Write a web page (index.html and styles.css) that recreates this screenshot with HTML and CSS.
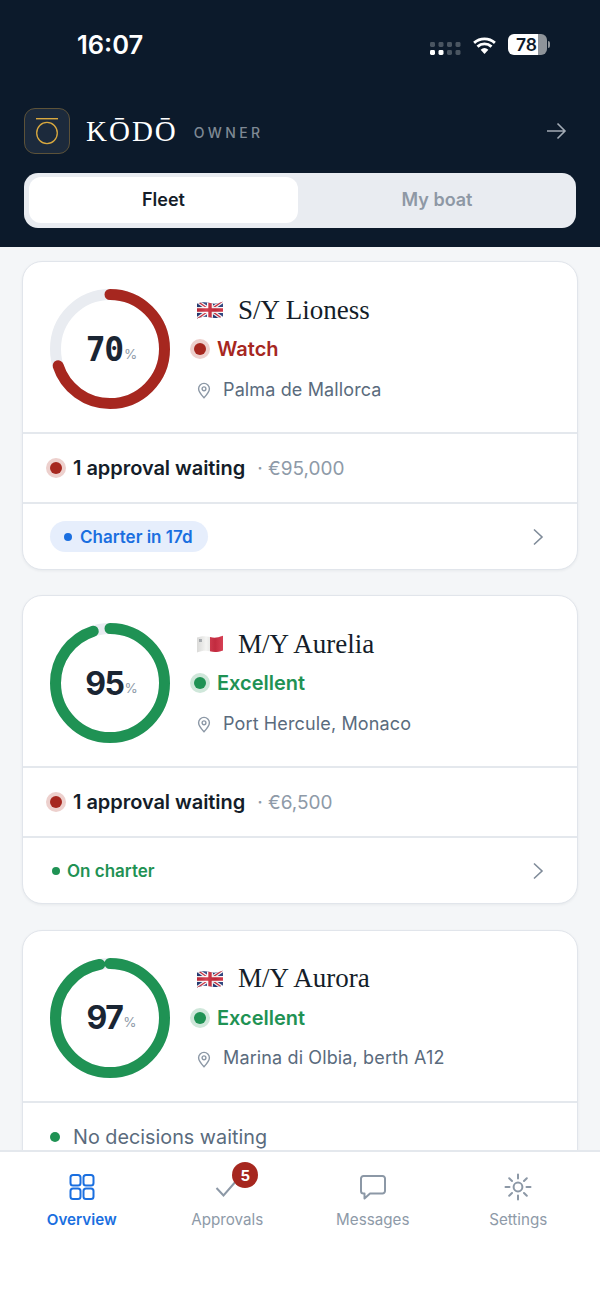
FILE: index.html
```html
<!DOCTYPE html>
<html lang="en">
<head>
    <meta charset="UTF-8">
    <meta name="viewport" content="width=device-width, initial-scale=1.0">
    <title>Kodo Owner</title>
    <link rel="stylesheet" href="styles.css">
</head>
<body>
    <svg class="svg-defs" width="0" height="0">
        <defs>
            <clipPath id="flagWave">
                <path d="M0 2.5 C6 0.5 9 1 13 2 S20 3 26 0.8 V15.5 C20 17.5 17 17.3 13 16.3 S5 15.3 0 17.5 Z"/>
            </clipPath>
            <linearGradient id="flagShade" x1="0" x2="1" y1="0" y2="0">
                <stop offset="0" stop-color="#000" stop-opacity="0.1"/>
                <stop offset="0.35" stop-color="#fff" stop-opacity="0.12"/>
                <stop offset="0.7" stop-color="#000" stop-opacity="0.08"/>
                <stop offset="1" stop-color="#fff" stop-opacity="0.08"/>
            </linearGradient>
        </defs>
    </svg>
    <div class="app">
        <div class="header">
            <div class="status-bar">
                <span class="clock">16:07</span>
                <div class="status-icons">
                    <svg class="signal" width="31" height="13" viewBox="0 0 31 13">
                        <g fill="#4a5561">
                            <rect x="0" y="0" width="5" height="5" rx="1.4"/><rect x="8.5" y="0" width="5" height="5" rx="1.4"/><rect x="17" y="0" width="5" height="5" rx="1.4"/><rect x="25.5" y="0" width="5" height="5" rx="1.4"/>
                            <rect x="17" y="8" width="5" height="5" rx="1.4"/><rect x="25.5" y="8" width="5" height="5" rx="1.4"/>
                        </g>
                        <rect x="0" y="8" width="5" height="5" rx="1.4" fill="#fff"/><rect x="8.5" y="8" width="5" height="5" rx="1.4" fill="#fff"/>
                    </svg>
                    <svg class="wifi" width="25" height="17" viewBox="0 0 26 18">
                        <path d="M13 18 L8.9 13.4 A6.2 6.2 0 0 1 17.1 13.4 Z" fill="#fff"/>
                        <path d="M5.6 10.2 A11 11 0 0 1 20.4 10.2" fill="none" stroke="#fff" stroke-width="3"/>
                        <path d="M2 6.2 A16.4 16.4 0 0 1 24 6.2" fill="none" stroke="#fff" stroke-width="3"/>
                    </svg>
                    <div class="battery">
                        <div class="battery-body"><span class="battery-level">78</span></div>
                        <span class="battery-tip"></span>
                    </div>
                </div>
            </div>
            <div class="brand-row">
                <div class="logo">
                    <svg width="28" height="32" viewBox="0 0 28 32">
                        <rect x="3" y="3" width="22" height="1.4" fill="#d9a93f"/>
                        <ellipse cx="14" cy="18" rx="10.3" ry="10.6" fill="none" stroke="#d9a93f" stroke-width="1.3"/>
                    </svg>
                </div>
                <span class="brand-name">KŌDŌ</span>
                <span class="brand-role">OWNER</span>
                <svg class="brand-arrow" width="22" height="20" viewBox="0 0 22 20">
                    <path d="M2 10 H20 M12.5 2.5 L20 10 L12.5 17.5" fill="none" stroke="#a3abb5" stroke-width="1.6"/>
                </svg>
            </div>
            <div class="segment">
                <div class="segment-item active">Fleet</div>
                <div class="segment-item">My boat</div>
            </div>
        </div>

        <div class="fleet-list">
            <div class="boat-card">
                <div class="boat-top">
                    <div class="ring">
                        <svg width="120" height="120" viewBox="0 0 120 120">
                            <circle class="ring-track" cx="60" cy="60" r="54.5"/>
                            <circle class="ring-bar red" cx="60" cy="60" r="54.5" pathLength="100" stroke-dasharray="70 100"/>
                        </svg>
                        <div class="ring-value"><span class="ring-num mono">70</span><span class="ring-pct">%</span></div>
                    </div>
                    <div class="boat-info">
                        <div class="boat-title">
                            <svg class="flag" width="26" height="18" viewBox="0 0 26 18">
                                <g clip-path="url(#flagWave)">
                                    <rect width="26" height="18" fill="#243a78"/>
                                    <path d="M0 0 L26 18 M26 0 L0 18" stroke="#fff" stroke-width="3.6"/>
                                    <path d="M0 0 L26 18 M26 0 L0 18" stroke="#cf2a3c" stroke-width="1.3"/>
                                    <path d="M13 0 V18 M0 9 H26" stroke="#fff" stroke-width="6"/>
                                    <path d="M13 0 V18 M0 9 H26" stroke="#cf2a3c" stroke-width="3.4"/>
                                    <rect width="26" height="18" fill="url(#flagShade)"/>
                                </g>
                            </svg>
                            <span class="boat-name">S/Y Lioness</span>
                        </div>
                        <div class="boat-status red-text"><span class="halo red"></span>Watch</div>
                        <div class="boat-place">
                            <svg class="pin" width="14" height="17" viewBox="0 0 14 17">
                                <path d="M7 15.8 C4 12.6 1.6 10 1.6 6.8 A5.4 5.4 0 0 1 12.4 6.8 C12.4 10 10 12.6 7 15.8 Z" fill="none" stroke="#8c98a6" stroke-width="1.4"/>
                                <circle cx="7" cy="6.8" r="1.9" fill="none" stroke="#8c98a6" stroke-width="1.4"/>
                            </svg>
                            Palma de Mallorca
                        </div>
                    </div>
                </div>
                <div class="boat-row">
                    <span class="halo red small"></span>
                    <span class="row-title">1 approval waiting</span>
                    <span class="row-amount">· €95,000</span>
                </div>
                <div class="boat-foot">
                    <span class="pill blue"><span class="dot"></span>Charter in 17d</span>
                    <svg class="chevron" width="12" height="18" viewBox="0 0 12 18"><path d="M2 1.5 L10 9 L2 16.5" fill="none" stroke="#7f8b99" stroke-width="1.6"/></svg>
                </div>
            </div>

            <div class="boat-card">
                <div class="boat-top">
                    <div class="ring">
                        <svg width="120" height="120" viewBox="0 0 120 120">
                            <circle class="ring-track" cx="60" cy="60" r="54.5"/>
                            <circle class="ring-bar green" cx="60" cy="60" r="54.5" pathLength="100" stroke-dasharray="95 100"/>
                        </svg>
                        <div class="ring-value"><span class="ring-num">95</span><span class="ring-pct">%</span></div>
                    </div>
                    <div class="boat-info">
                        <div class="boat-title">
                            <svg class="flag" width="26" height="18" viewBox="0 0 26 18">
                                <g clip-path="url(#flagWave)">
                                    <rect width="13" height="18" fill="#f3f3f1"/>
                                    <rect x="13" width="13" height="18" fill="#d32f45"/>
                                    <rect x="2" y="4" width="3" height="3" fill="#b0b4b8"/>
                                    <rect width="26" height="18" fill="url(#flagShade)"/>
                                </g>
                            </svg>
                            <span class="boat-name">M/Y Aurelia</span>
                        </div>
                        <div class="boat-status green-text"><span class="halo green"></span>Excellent</div>
                        <div class="boat-place">
                            <svg class="pin" width="14" height="17" viewBox="0 0 14 17">
                                <path d="M7 15.8 C4 12.6 1.6 10 1.6 6.8 A5.4 5.4 0 0 1 12.4 6.8 C12.4 10 10 12.6 7 15.8 Z" fill="none" stroke="#8c98a6" stroke-width="1.4"/>
                                <circle cx="7" cy="6.8" r="1.9" fill="none" stroke="#8c98a6" stroke-width="1.4"/>
                            </svg>
                            Port Hercule, Monaco
                        </div>
                    </div>
                </div>
                <div class="boat-row">
                    <span class="halo red small"></span>
                    <span class="row-title">1 approval waiting</span>
                    <span class="row-amount">· €6,500</span>
                </div>
                <div class="boat-foot">
                    <span class="pill plain"><span class="dot"></span>On charter</span>
                    <svg class="chevron" width="12" height="18" viewBox="0 0 12 18"><path d="M2 1.5 L10 9 L2 16.5" fill="none" stroke="#7f8b99" stroke-width="1.6"/></svg>
                </div>
            </div>

            <div class="boat-card">
                <div class="boat-top">
                    <div class="ring">
                        <svg width="120" height="120" viewBox="0 0 120 120">
                            <circle class="ring-track" cx="60" cy="60" r="54.5"/>
                            <circle class="ring-bar green" cx="60" cy="60" r="54.5" pathLength="100" stroke-dasharray="97 100"/>
                        </svg>
                        <div class="ring-value"><span class="ring-num">97</span><span class="ring-pct">%</span></div>
                    </div>
                    <div class="boat-info">
                        <div class="boat-title">
                            <svg class="flag" width="26" height="18" viewBox="0 0 26 18">
                                <g clip-path="url(#flagWave)">
                                    <rect width="26" height="18" fill="#243a78"/>
                                    <path d="M0 0 L26 18 M26 0 L0 18" stroke="#fff" stroke-width="3.6"/>
                                    <path d="M0 0 L26 18 M26 0 L0 18" stroke="#cf2a3c" stroke-width="1.3"/>
                                    <path d="M13 0 V18 M0 9 H26" stroke="#fff" stroke-width="6"/>
                                    <path d="M13 0 V18 M0 9 H26" stroke="#cf2a3c" stroke-width="3.4"/>
                                    <rect width="26" height="18" fill="url(#flagShade)"/>
                                </g>
                            </svg>
                            <span class="boat-name">M/Y Aurora</span>
                        </div>
                        <div class="boat-status green-text"><span class="halo green"></span>Excellent</div>
                        <div class="boat-place">
                            <svg class="pin" width="14" height="17" viewBox="0 0 14 17">
                                <path d="M7 15.8 C4 12.6 1.6 10 1.6 6.8 A5.4 5.4 0 0 1 12.4 6.8 C12.4 10 10 12.6 7 15.8 Z" fill="none" stroke="#8c98a6" stroke-width="1.4"/>
                                <circle cx="7" cy="6.8" r="1.9" fill="none" stroke="#8c98a6" stroke-width="1.4"/>
                            </svg>
                            Marina di Olbia, berth A12
                        </div>
                    </div>
                </div>
                <div class="boat-row">
                    <span class="solid-dot"></span>
                    <span class="row-plain">No decisions waiting</span>
                </div>
            </div>
        </div>

        <div class="tab-bar">
            <div class="tab active">
                <svg width="28" height="28" viewBox="0 0 28 28">
                    <g fill="none" stroke="#1a6fe0" stroke-width="2">
                        <rect x="2.5" y="2" width="10" height="10.5" rx="2.5"/><rect x="15.5" y="2" width="10" height="10.5" rx="2.5"/>
                        <rect x="2.5" y="15.5" width="10" height="10.5" rx="2.5"/><rect x="15.5" y="15.5" width="10" height="10.5" rx="2.5"/>
                    </g>
                </svg>
                <span>Overview</span>
            </div>
            <div class="tab">
                <div class="tab-icon">
                    <svg width="28" height="28" viewBox="0 0 28 28">
                        <path d="M3.5 15 L10.5 22.5 L24 7" fill="none" stroke="#8c98a6" stroke-width="2"/>
                    </svg>
                    <span class="badge">5</span>
                </div>
                <span>Approvals</span>
            </div>
            <div class="tab">
                <svg width="28" height="28" viewBox="0 0 28 28">
                    <path d="M4.5 3 H23.5 A2.5 2.5 0 0 1 26 5.5 V18 A2.5 2.5 0 0 1 23.5 20.5 H11 L5.5 25.5 V20.5 H4.5 A2.5 2.5 0 0 1 2 18 V5.5 A2.5 2.5 0 0 1 4.5 3 Z" fill="none" stroke="#8c98a6" stroke-width="2" stroke-linejoin="round"/>
                </svg>
                <span>Messages</span>
            </div>
            <div class="tab">
                <svg width="28" height="28" viewBox="0 0 28 28">
                    <circle cx="14" cy="14" r="4.4" fill="none" stroke="#8c98a6" stroke-width="2"/>
                    <path d="M14 1.5 V5.5 M14 22.5 V26.5 M1.5 14 H5.5 M22.5 14 H26.5 M5.2 5.2 L8 8 M20 20 L22.8 22.8 M5.2 22.8 L8 20 M20 8 L22.8 5.2" fill="none" stroke="#8c98a6" stroke-width="2" stroke-linecap="round"/>
                </svg>
                <span>Settings</span>
            </div>
        </div>
    </div>
</body>
</html>
```

FILE: styles.css
```css
* {
    margin: 0;
    padding: 0;
    box-sizing: border-box;
}

body {
    font-family: Inter, 'Noto Sans', sans-serif;
    background: #ffffff;
    color: #141d29;
}

.svg-defs {
    display: block;
    height: 0;
}

.app {
    width: 600px;
    height: 1301px;
    display: flex;
    flex-direction: column;
    overflow: hidden;
    background: #f4f6f8;
}

/* header */
.header {
    flex: 0 0 247px;
    background: #0c1a2b;
    padding: 0 24px;
}

.status-bar {
    height: 108px;
    display: flex;
    justify-content: space-between;
    align-items: flex-start;
    padding: 29px 26px 0 53px;
}

.clock {
    color: #ffffff;
    font-size: 25.5px;
    font-weight: 600;
    line-height: 31px;
}

.status-icons {
    display: flex;
    align-items: flex-start;
    gap: 11px;
    padding-top: 5px;
}

.signal {
    margin-top: 8px;
}

.wifi {
    margin-top: 3px;
}

.battery {
    display: flex;
    align-items: center;
    gap: 1px;
}

.battery-body {
    width: 39px;
    height: 21px;
    border-radius: 6px;
    background: linear-gradient(90deg, #ffffff 78%, #8f949a 78%);
    display: flex;
    align-items: center;
    padding-left: 8px;
}

.battery-level {
    color: #0c1a2b;
    font-size: 17.5px;
    font-weight: 600;
}

.battery-tip {
    width: 2px;
    height: 7px;
    background: #8f949a;
    border-radius: 0 2px 2px 0;
}

.brand-row {
    display: flex;
    align-items: center;
    height: 46px;
    margin-bottom: 19px;
}

.logo {
    width: 46px;
    height: 46px;
    border-radius: 11px;
    background: #1c2a3c;
    border: 1.5px solid #5c5239;
    display: flex;
    align-items: center;
    justify-content: center;
    margin-right: 16px;
}

.brand-name {
    font-family: 'Liberation Serif', serif;
    font-size: 29px;
    color: #ffffff;
    letter-spacing: 2px;
    margin-right: 16px;
}

.brand-role {
    font-size: 14px;
    font-weight: 500;
    letter-spacing: 3.4px;
    color: #7f8994;
    padding-top: 3px;
}

.brand-arrow {
    margin-left: auto;
    margin-right: 9px;
}

.segment {
    display: grid;
    grid-template-columns: 269px 1fr;
    height: 55px;
    padding: 4px 0 5px 5px;
    border-radius: 14px;
    background: #e9ecf1;
}

.segment-item {
    display: flex;
    align-items: center;
    justify-content: center;
    font-size: 18px;
    font-weight: 600;
    color: #8e98a5;
    border-radius: 12px;
    padding-bottom: 1px;
}

.segment-item.active {
    background: #ffffff;
    color: #141d29;
}

/* cards */
.fleet-list {
    flex: 1;
    min-height: 0;
    overflow: hidden;
    padding: 14px 22px 0;
    display: flex;
    flex-direction: column;
    gap: 25.4px;
}

.boat-card {
    flex: none;
    background: #ffffff;
    border: 1px solid #e1e5eb;
    border-radius: 20px;
    box-shadow: 0 1px 3px rgba(20, 30, 45, 0.06);
}

.boat-top {
    height: 172px;
    display: flex;
    align-items: flex-start;
    padding: 27px 0 0 27px;
    gap: 20px;
    border-bottom: 2px solid #e4e8ed;
}

.ring {
    position: relative;
    width: 120px;
    height: 120px;
    flex: none;
}

.ring svg {
    display: block;
    transform: rotate(-90deg);
}

.ring-track {
    fill: none;
    stroke: #e9ecf1;
    stroke-width: 11;
}

.ring-bar {
    fill: none;
    stroke-width: 11;
    stroke-linecap: round;
}

.ring-bar.red {
    stroke: #a6271f;
}

.ring-bar.green {
    stroke: #1f9254;
}

.ring-value {
    position: absolute;
    inset: 0;
    display: flex;
    align-items: center;
    justify-content: center;
    padding-left: 3px;
}

.ring-num {
    font-size: 32px;
    font-weight: 700;
    letter-spacing: -1.5px;
    color: #1a2533;
}

.ring-num.mono {
    font-family: 'DejaVu Sans Mono', monospace;
    font-size: 33px;
    letter-spacing: -1.2px;
}

.ring-pct {
    font-size: 13.5px;
    color: #8e9aa8;
    padding-top: 9px;
    margin-left: 1px;
}

.boat-info {
    display: flex;
    flex-direction: column;
    gap: 10px;
    margin-top: 6px;
}

.boat-title {
    display: flex;
    align-items: center;
    height: 30px;
    padding-left: 7px;
}

.flag {
    margin-right: 15px;
    flex: none;
}

.boat-name {
    font-family: 'Liberation Serif', serif;
    font-size: 27px;
    color: #141d29;
}

.boat-status {
    display: flex;
    align-items: center;
    gap: 7px;
    font-size: 20px;
    font-weight: 600;
    height: 28px;
}

.red-text {
    color: #a6271f;
}

.green-text {
    color: #1f9254;
}

.halo {
    width: 20px;
    height: 20px;
    border-radius: 50%;
    display: inline-block;
    flex: none;
    position: relative;
}

.halo.red {
    background: #edd0cd;
}

.halo.green {
    background: #cfe7da;
}

.halo::after {
    content: '';
    position: absolute;
    left: 4px;
    top: 4px;
    width: 12px;
    height: 12px;
    border-radius: 50%;
}

.halo.red::after {
    background: #a6271f;
}

.halo.green::after {
    background: #1f9254;
}

.boat-place {
    display: flex;
    align-items: center;
    font-size: 18px;
    letter-spacing: 0.13px;
    color: #5a6b7d;
    padding-left: 7px;
    height: 24px;
    margin-top: 4px;
}

.pin {
    margin-right: 12px;
    margin-top: 3px;
}

.boat-row {
    height: 70px;
    display: flex;
    align-items: center;
    padding: 0 23px;
    border-bottom: 2px solid #e4e8ed;
}

.boat-row .halo {
    margin-right: 7px;
}

.row-title {
    font-size: 20px;
    font-weight: 600;
    letter-spacing: -0.05px;
    color: #141d29;
    margin-right: 12px;
}

.row-amount {
    font-size: 19px;
    color: #8e9aa8;
}

.solid-dot {
    width: 10px;
    height: 10px;
    border-radius: 50%;
    background: #1f9254;
    margin: 0 13px 0 4px;
}

.row-plain {
    font-size: 19.8px;
    color: #5a6b7d;
}

.boat-foot {
    height: 65px;
    display: flex;
    align-items: center;
    justify-content: space-between;
    padding: 0 33px 0 27px;
}

.pill {
    display: inline-flex;
    align-items: center;
    font-size: 17px;
    font-weight: 600;
    height: 31px;
    border-radius: 16px;
}

.pill .dot {
    width: 8px;
    height: 8px;
    border-radius: 50%;
    margin-right: 8px;
}

.pill.blue {
    background: #e6eefc;
    color: #1a6fe0;
    padding: 0 15px 0 14px;
}

.pill.blue .dot {
    background: #1a6fe0;
}

.pill.plain {
    color: #1f9254;
    padding-left: 2px;
}

.pill.plain .dot {
    background: #1f9254;
    margin-right: 7px;
}

/* bottom tabs */
.tab-bar {
    flex: 0 0 151px;
    display: grid;
    grid-template-columns: repeat(4, 1fr);
    padding: 0 9px;
    background: #ffffff;
    border-top: 2px solid #e4e8ed;
    position: relative;
    z-index: 1;
}

.tab {
    display: flex;
    flex-direction: column;
    align-items: center;
    padding-top: 21px;
    gap: 9px;
    font-size: 15.2px;
    color: #8e9aa8;
}

.tab svg {
    display: block;
}

.tab.active {
    color: #1a6fe0;
    font-weight: 600;
}

.tab-icon {
    position: relative;
}

.badge {
    position: absolute;
    left: 19px;
    top: -11px;
    width: 26px;
    height: 26px;
    border-radius: 50%;
    background: #a6271f;
    color: #ffffff;
    font-size: 15px;
    font-weight: 700;
    display: flex;
    align-items: center;
    justify-content: center;
}
```
